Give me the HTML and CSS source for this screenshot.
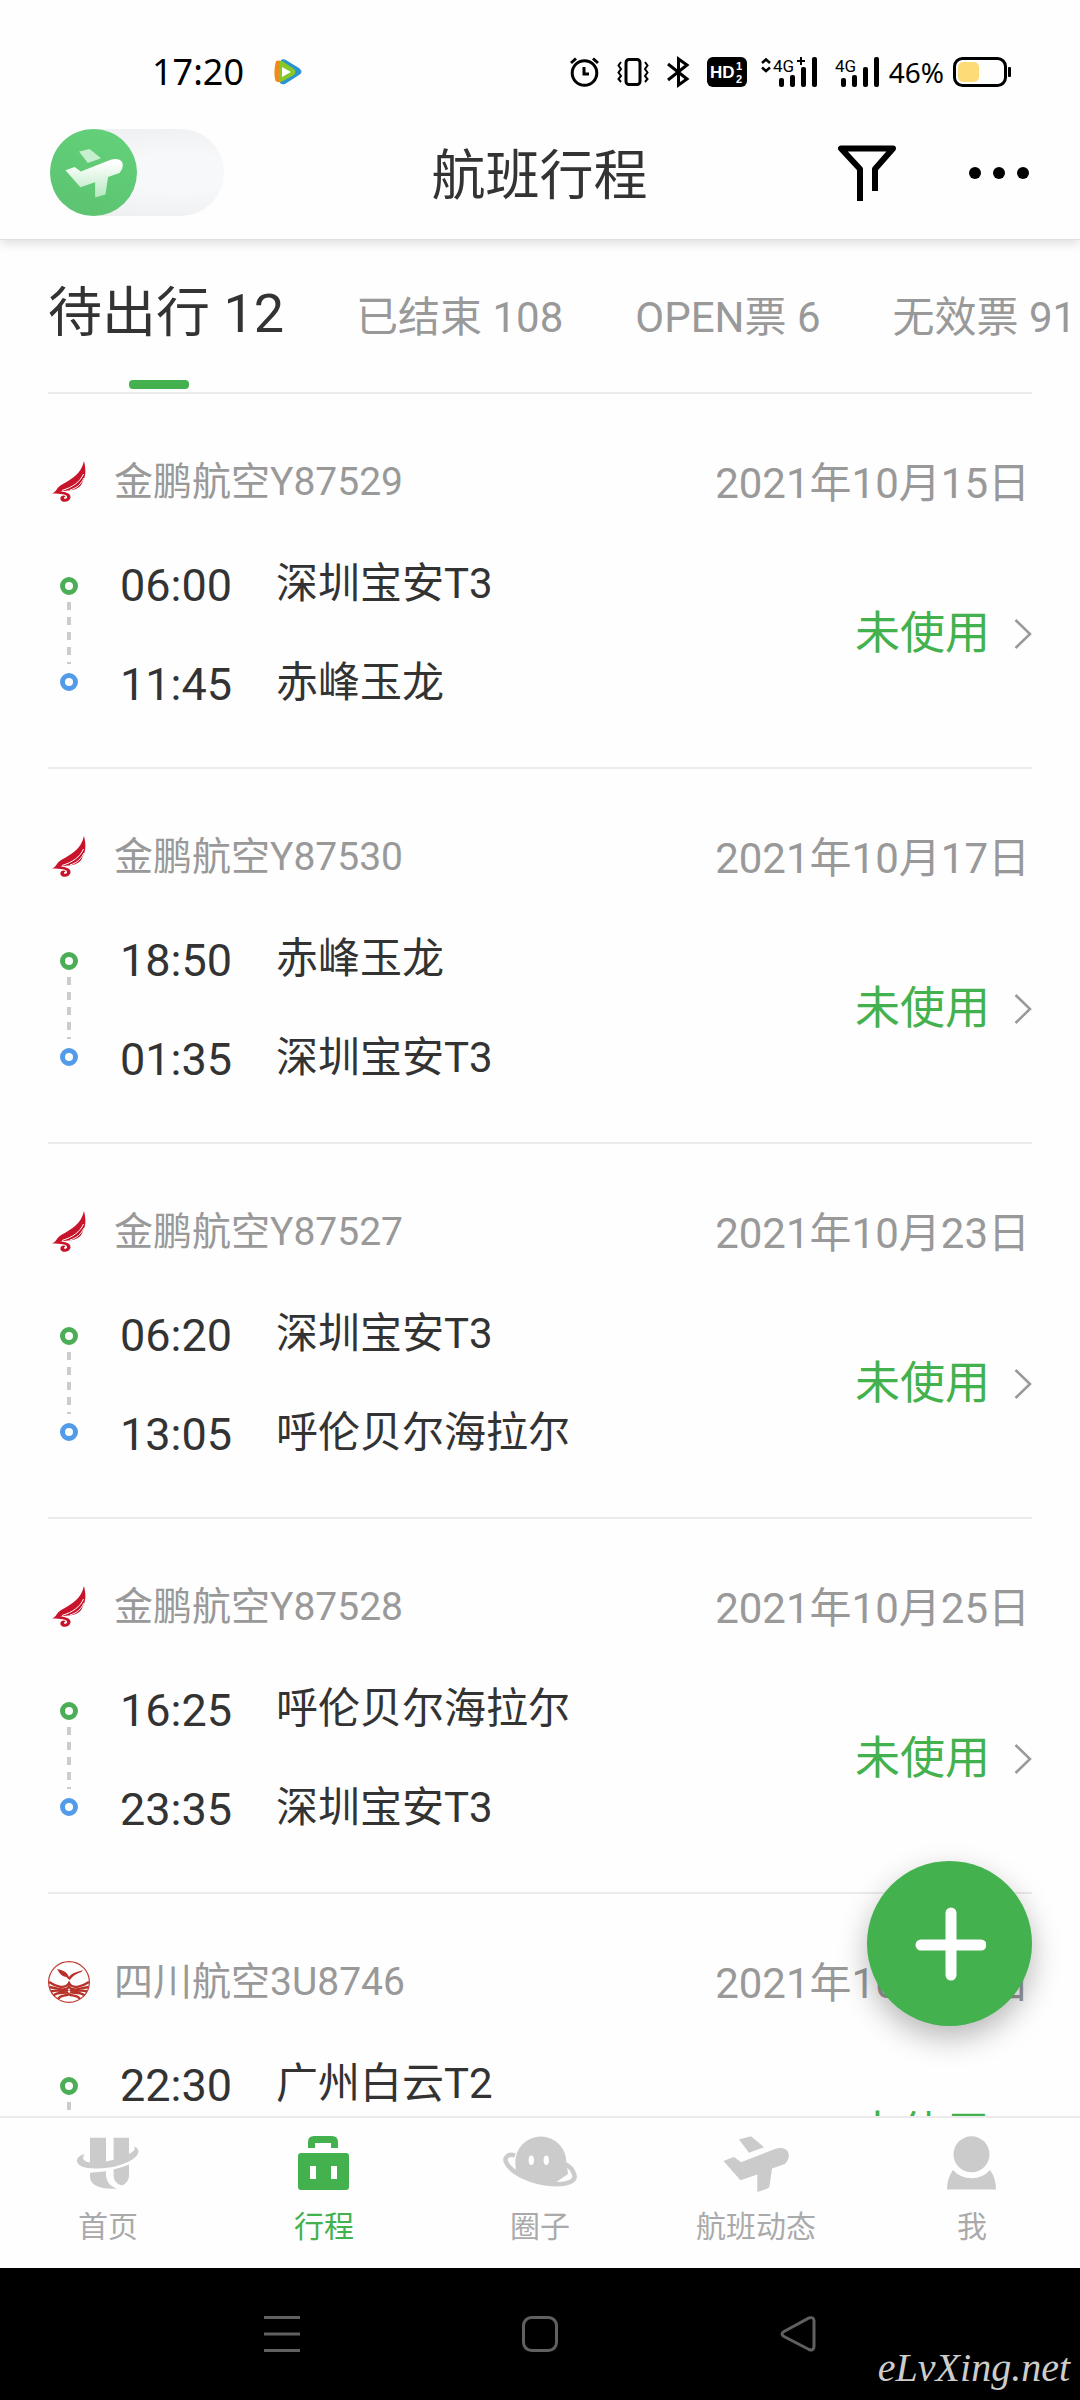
FILE: index.html
```html
<!DOCTYPE html>
<html lang="zh-CN">
<head>
    <meta charset="UTF-8">
    <meta name="viewport" content="width=device-width, initial-scale=1.0">
    <title>航班行程</title>
    <link rel="stylesheet" href="styles.css">
</head>
<body>
    <!-- 图标 -->
    <svg class="sprite" aria-hidden="true">
        <symbol id="icon-plane" viewBox="0 0 66 56">
            <path d="M16 3.5 27 .6Q28.500 .2 29.500 1.500L41 11.300 26 16.700Z"/>
            <path d="M.5 25 10 21.300Q11.500 21 12.500 22L18 26.300 52 13Q61 10 65 15.500Q67.500 22 62 28L49 32.500 46.500 50Q46.200 52 44 52.800L34.300 56V38.500L17.500 44.300Z"/>
        </symbol>
        <symbol id="logo-jinpeng" viewBox="0 0 42 42">
            <path fill="#c8142b" d="M36 0C38 8 38 15 35 20C33 26 29 29 20 29.500C17 30 15 30 12 30.500C17 31 23 32 22.500 36.500C22 41 14 42.500 12.500 38.500C11.500 35 16 33.500 17.500 35.500C14 37 17 39 18.800 37C20.500 33.500 14 32.500 4 32.500C9 30.500 8 27 14 23.500C24 18 33 13 36 0Z"/>
            <path fill="none" stroke="#fff" stroke-width="1" d="M35.500 13C32 21 25 26 14 29.500M36 17C33 23 29 27 22 29"/>
        </symbol>
        <symbol id="logo-sichuan" viewBox="0 0 42 42">
            <circle cx="21" cy="21" r="20.400" fill="#fff" stroke="#c0392f" stroke-width="1.200"/>
            <path fill="#b8322a" d="M9 8C15 9 19 11 21 16C25 11 30 11 35 9C33 13 27 11 22 19C19 18 20 16 16 15.500C12 14 11 11 9 8Z"/>
            <g fill="none" stroke="#b8322a" stroke-width="2.400">
                <path d="M1 21C7 25 17 29 21 22C25 29 35 25 41 21"/>
                <path d="M1.500 26C9 27 18 31 21 25.500C24 31 33 27 40.500 26"/>
                <path d="M3 30.500C10 28 17 32 20 28.500M22 28.500C25 32 32 28 39 30.500"/>
                <path d="M5.500 34.500C11 30 16 33 20 31M22 31C26 33 31 30 36.500 34.500"/>
                <path d="M10 38C13 33 17 36 20.500 33C25 36 29 33 32 38"/>
            </g>
        </symbol>
        <symbol id="icon-arrow" viewBox="0 0 18 30">
            <path d="M1.500 1 16 15 1.500 29" fill="none" stroke="#999" stroke-width="2.500"/>
        </symbol>
    </svg>

    <div class="app">
        <div class="status-bar">
            <div class="status-left">
                <span class="clock">17:20</span>
                <svg width="28" height="26" viewBox="0 0 28 26">
                    <path d="M7 1Q8 0 11 .5L25 9Q30 13 25 16L11 25Q8 26 6 24Z" fill="#2b93d1"/>
                    <path d="M2 2Q5 1 7 2V23Q4 24 1.500 22Q-1 12 2 2Z" fill="#f08a1d"/>
                    <path d="M6 3Q6 1 9 2.500L20 10Q23 13 20 16L9 22Q6 24 5 21Z" fill="#86c827"/>
                    <path d="M8 8 17 13 8 18Z" fill="#fff"/>
                </svg>
            </div>
            <div class="status-right">
                <svg class="st-alarm" width="29" height="30" viewBox="0 0 29 30" fill="none" stroke="#000" stroke-width="3">
                    <circle cx="14.500" cy="16" r="12.300"/>
                    <path d="M1 6 6 1.500M28 6 23 1.500M14 10V17H19"/>
                </svg>
                <svg class="st-vibrate" width="32" height="30" viewBox="0 0 32 30" fill="none" stroke="#000">
                    <rect x="9" y="2.500" width="14" height="25" rx="3" stroke-width="3"/>
                    <path d="M4 5 1.500 8.500 4 12 1.500 15.500 4 19 1.500 22 4 25M28 5 30.500 8.500 28 12 30.500 15.500 28 19 30.500 22 28 25" stroke-width="2"/>
                </svg>
                <svg class="st-bt" width="22" height="30" viewBox="0 0 22 30" fill="none" stroke="#000" stroke-width="3">
                    <path d="M1 7 20 22 11.500 28V2L20 8 1 23"/>
                </svg>
                <svg class="st-hd" width="40" height="30" viewBox="0 0 40 30">
                    <rect width="40" height="30" rx="6"/>
                    <text x="3" y="21" class="hd-text">HD</text>
                    <text x="29" y="13" class="hd-num">1</text>
                    <text x="29" y="26" class="hd-num">2</text>
                </svg>
                <svg class="st-signal" width="58" height="30" viewBox="0 0 58 30">
                    <path d="M1 6 5 2.500 9 6M1 10.500 5 14 9 10.500" fill="none" stroke="#000" stroke-width="2.500"/>
                    <text x="12" y="15" class="net-text">4G</text>
                    <path d="M36 4H44M40 0V8" stroke="#000" stroke-width="2"/>
                    <rect x="18" y="21" width="5" height="9" rx="2"/>
                    <rect x="29" y="18" width="5" height="12" rx="2"/>
                    <rect x="40" y="10" width="5" height="20" rx="2"/>
                    <rect x="51" y="0" width="5" height="30" rx="2"/>
                </svg>
                <svg class="st-signal2" width="45" height="30" viewBox="0 0 45 30">
                    <text x="0" y="15" class="net-text">4G</text>
                    <rect x="6" y="21" width="5" height="9" rx="2"/>
                    <rect x="17" y="18" width="5" height="12" rx="2"/>
                    <rect x="28" y="10" width="5" height="20" rx="2"/>
                    <rect x="39" y="0" width="5" height="30" rx="2"/>
                </svg>
                <span class="battery-text">46%</span>
                <svg width="58" height="30" viewBox="0 0 58 30">
                    <rect x="1.500" y="1.500" width="51" height="27" rx="8" fill="none" stroke="#000" stroke-width="3"/>
                    <rect x="5" y="5" width="21" height="20" rx="5" fill="#fddc78"/>
                    <rect x="55" y="10" width="3" height="10" rx="1"/>
                </svg>
            </div>
        </div>

        <header class="header">
            <label class="toggle">
                <input type="checkbox" aria-label="切换">
                <span class="knob">
                    <svg width="58" height="50" viewBox="0 0 66 56">
                        <defs>
                            <linearGradient id="plane-fill" x1="0" y1="0" x2="0" y2="1">
                                <stop offset="0.100" stop-color="#fff"/>
                                <stop offset="1" stop-color="#b4e8bf"/>
                            </linearGradient>
                        </defs>
                        <path fill="#c5efcd" d="M16 3.500 28 .6 41 11.300 26 16.700Z"/>
                        <path fill="url(#plane-fill)" d="M.5 25 11 21.300 18 26.300 52 13Q61 10 65 15.500Q67.500 22 62 28L49 32.500 46 52.500 34.300 56V38.500L17.500 44.300Z"/>
                    </svg>
                </span>
            </label>
            <h1>航班行程</h1>
            <div class="header-actions">
                <button type="button" aria-label="筛选">
                    <svg width="58" height="56" viewBox="0 0 58 56" fill="none" stroke="#000" stroke-width="6" stroke-linejoin="round">
                        <path d="M22 56V24L3 3.500H55L37 24V46"/>
                    </svg>
                </button>
                <button type="button" aria-label="更多">
                    <svg width="60" height="12" viewBox="0 0 60 12">
                        <circle cx="6" cy="6" r="6"/>
                        <circle cx="30" cy="6" r="6"/>
                        <circle cx="54" cy="6" r="6"/>
                    </svg>
                </button>
            </div>
        </header>

        <nav class="tabs">
            <button type="button" class="tab active">待出行 12</button>
            <button type="button" class="tab">已结束 108</button>
            <button type="button" class="tab">OPEN票 6</button>
            <button type="button" class="tab">无效票 91</button>
        </nav>

        <main class="content">
            <div class="flight-list">
                <article class="flight">
                    <div class="flight-head">
                        <svg class="logo"><use href="#logo-jinpeng"/></svg>
                        <span class="flight-no">金鹏航空Y87529</span>
                        <span class="date">2021年10月15日</span>
                    </div>
                    <div class="flight-body">
                        <div class="track"><i class="dot"></i><i class="dash"></i><i class="dot arrive"></i></div>
                        <div class="route">
                            <div class="stop"><span class="time">06:00</span><span class="city">深圳宝安T3</span></div>
                            <div class="stop"><span class="time">11:45</span><span class="city">赤峰玉龙</span></div>
                        </div>
                        <a href="#" class="state">未使用<svg><use href="#icon-arrow"/></svg></a>
                    </div>
                </article>

                <article class="flight">
                    <div class="flight-head">
                        <svg class="logo"><use href="#logo-jinpeng"/></svg>
                        <span class="flight-no">金鹏航空Y87530</span>
                        <span class="date">2021年10月17日</span>
                    </div>
                    <div class="flight-body">
                        <div class="track"><i class="dot"></i><i class="dash"></i><i class="dot arrive"></i></div>
                        <div class="route">
                            <div class="stop"><span class="time">18:50</span><span class="city">赤峰玉龙</span></div>
                            <div class="stop"><span class="time">01:35</span><span class="city">深圳宝安T3</span></div>
                        </div>
                        <a href="#" class="state">未使用<svg><use href="#icon-arrow"/></svg></a>
                    </div>
                </article>

                <article class="flight">
                    <div class="flight-head">
                        <svg class="logo"><use href="#logo-jinpeng"/></svg>
                        <span class="flight-no">金鹏航空Y87527</span>
                        <span class="date">2021年10月23日</span>
                    </div>
                    <div class="flight-body">
                        <div class="track"><i class="dot"></i><i class="dash"></i><i class="dot arrive"></i></div>
                        <div class="route">
                            <div class="stop"><span class="time">06:20</span><span class="city">深圳宝安T3</span></div>
                            <div class="stop"><span class="time">13:05</span><span class="city">呼伦贝尔海拉尔</span></div>
                        </div>
                        <a href="#" class="state">未使用<svg><use href="#icon-arrow"/></svg></a>
                    </div>
                </article>

                <article class="flight">
                    <div class="flight-head">
                        <svg class="logo"><use href="#logo-jinpeng"/></svg>
                        <span class="flight-no">金鹏航空Y87528</span>
                        <span class="date">2021年10月25日</span>
                    </div>
                    <div class="flight-body">
                        <div class="track"><i class="dot"></i><i class="dash"></i><i class="dot arrive"></i></div>
                        <div class="route">
                            <div class="stop"><span class="time">16:25</span><span class="city">呼伦贝尔海拉尔</span></div>
                            <div class="stop"><span class="time">23:35</span><span class="city">深圳宝安T3</span></div>
                        </div>
                        <a href="#" class="state">未使用<svg><use href="#icon-arrow"/></svg></a>
                    </div>
                </article>

                <article class="flight">
                    <div class="flight-head">
                        <svg class="logo"><use href="#logo-sichuan"/></svg>
                        <span class="flight-no">四川航空3U8746</span>
                        <span class="date">2021年10月28日</span>
                    </div>
                    <div class="flight-body">
                        <div class="track"><i class="dot"></i><i class="dash"></i><i class="dot arrive"></i></div>
                        <div class="route">
                            <div class="stop"><span class="time">22:30</span><span class="city">广州白云T2</span></div>
                        </div>
                        <a href="#" class="state">未使用<svg><use href="#icon-arrow"/></svg></a>
                    </div>
                </article>
            </div>

            <button type="button" class="fab" aria-label="添加行程">
                <svg width="72" height="74" viewBox="0 0 72 74" stroke="#fff" stroke-width="11" stroke-linecap="round">
                    <path d="M37 6V68M7 38H67"/>
                </svg>
            </button>
        </main>

        <nav class="bottom-nav">
            <a href="#">
                <svg width="66" height="56" viewBox="0 0 66 56">
                    <path d="M15 1.700H31V25.500L38.600 23.800V1.700H54V18Q58 16 59.500 14Q60 12 59 10.500Q63.500 12 63.500 15.500C63 24 42 32.300 24 32.500C8 33 2 29 2 25C2 21 6 19 9.500 18Q7 22 9 24Q11 26 15 26.500Z"/>
                    <path d="M15 36.700 31 35.300C30.500 45 34 50 42 52.500C28 54 15 50 15 41Z"/>
                    <path d="M38.600 33.500Q47 31.500 54 28.500V40.500Q53 47 47 49.500C41 48 38.600 44 38.600 38Z"/>
                </svg>
                <span>首页</span>
            </a>
            <a href="#" class="active">
                <svg width="52" height="56" viewBox="0 0 52 56">
                    <path d="M10 12V6Q10 0 16 0H34Q40 0 40 6V12H33V7H17V12Z"/>
                    <path fill-rule="evenodd" d="M3 17H48Q51 17 51 20V51Q51 54 48 54H3Q0 54 0 51V20Q0 17 3 17ZM12 30V43H18V30ZM33 30V43H39V30Z"/>
                </svg>
                <span>行程</span>
            </a>
            <a href="#">
                <svg width="76" height="56" viewBox="0 0 76 56">
                    <path d="M13.300 26A25.500 25.500 0 0 1 64.300 26L66 38 50 49C35 50 20 42 14 35Z"/>
                    <path d="M13 19.500C6 17 2 22 4 26C9 37 30 47 50 48C66 49 75 45 72 38C71 34 67 30 63 28" fill="none" stroke="#cbcbcb" stroke-width="4.500"/>
                    <ellipse cx="29.300" cy="24.300" rx="2.700" ry="4.700" fill="#fff"/>
                    <ellipse cx="44.300" cy="24.300" rx="2.700" ry="4.700" fill="#fff"/>
                </svg>
                <span>圈子</span>
            </a>
            <a href="#">
                <svg width="66" height="56"><use href="#icon-plane"/></svg>
                <span>航班动态</span>
            </a>
            <a href="#">
                <svg width="50" height="56" viewBox="0 0 50 56">
                    <circle cx="24.500" cy="18.300" r="18"/>
                    <path d="M6 34Q13 42 24.500 42.300Q36 42 43 34Q49 42 49 53.500H0Q0 42 6 34Z"/>
                </svg>
                <span>我</span>
            </a>
        </nav>

        <div class="system-nav">
            <button type="button" aria-label="最近任务">
                <svg width="36" height="36" viewBox="0 0 36 36" stroke="#606060" stroke-width="3"><path d="M0 1.500H36M0 18H36M0 34.500H36"/></svg>
            </button>
            <button type="button" aria-label="主屏幕">
                <svg width="36" height="36" viewBox="0 0 36 36" fill="none" stroke="#606060" stroke-width="3"><rect x="1.500" y="1.500" width="33" height="33" rx="8"/></svg>
            </button>
            <button type="button" aria-label="返回">
                <svg width="36" height="36" viewBox="0 0 36 36" fill="none" stroke="#606060" stroke-width="3"><path d="M4 15.500 29 2Q34 .5 34 5V30Q34 35.500 29 33.500L4 20.500Q0 18 4 15.500Z"/></svg>
            </button>
            <span class="watermark">eLvXing.net</span>
        </div>
    </div>
</body>
</html>
```
FILE: styles.css
```css
* {
    box-sizing: border-box;
}

body {
    margin: 0;
    background: #fefefe;
    color: #333;
    font-family: Roboto, "Noto Sans CJK SC", sans-serif;
}

button {
    padding: 0;
    border: none;
    background: none;
    font-family: inherit;
    cursor: pointer;
}

a {
    color: inherit;
    text-decoration: none;
}

svg {
    display: block;
    flex-shrink: 0;
}

.sprite {
    position: absolute;
    width: 0;
    height: 0;
}

.app {
    display: flex;
    flex-direction: column;
    height: 100vh;
    overflow: hidden;
}

/* 状态栏 */
.status-bar {
    display: flex;
    justify-content: space-between;
    align-items: center;
    padding: 45px 69px 0 152px;
    line-height: 54px;
    color: #000;
    font-family: "Noto Sans", sans-serif;
}

.status-left {
    display: flex;
    align-items: center;
    gap: 30px;
}

.status-right {
    display: flex;
    align-items: center;
}

.status-right svg {
    overflow: visible;
}

.clock {
    font-size: 36px;
}

.battery-text {
    margin-right: 9px;
    font-size: 28px;
}

.st-alarm,
.st-vibrate,
.st-bt {
    margin-right: 18px;
}

.st-hd {
    margin-right: 14px;
}

.st-signal {
    margin-right: 16px;
}

.st-signal2 {
    margin-right: 9px;
}

.hd-text {
    fill: #fff;
    font: bold 17px "Liberation Sans", sans-serif;
}

.hd-num {
    fill: #fff;
    font: bold 11px "Liberation Sans", sans-serif;
}

.net-text {
    font: 17px Roboto, sans-serif;
}

/* 顶部标题 */
.header {
    display: grid;
    grid-template-columns: 1fr auto 1fr;
    align-items: center;
    padding: 30px 51px 23px 50px;
    border-bottom: 1px solid #e0e0e0;
    box-shadow: 0 4px 10px rgba(0, 0, 0, 0.12);
    clip-path: inset(0 0 -20px);
}

.header h1 {
    margin: 0;
    padding-top: 8px;
    font-size: 54px;
    font-weight: 400;
    line-height: 72px;
}

.toggle {
    position: relative;
    width: 174px;
    height: 87px;
}

.toggle input {
    appearance: none;
    width: 100%;
    height: 100%;
    margin: 0;
    border-radius: 44px;
    background: radial-gradient(ellipse at 75% 50%, #f7f8fa 30%, #ebecee 100%);
}

.knob {
    position: absolute;
    top: 0;
    left: 0;
    display: flex;
    align-items: center;
    justify-content: center;
    width: 87px;
    height: 87px;
    border-radius: 50%;
    background: linear-gradient(20deg, #5cc271, #63d27a);
}

.header-actions {
    display: flex;
    justify-content: flex-end;
    align-items: center;
    gap: 73px;
}

/* 分类标签 */
.tabs {
    position: relative;
    display: flex;
    align-items: baseline;
    gap: 72px;
    margin-left: 48px;
    margin-right: 48px;
    padding: 38px 0;
    border-bottom: 2px solid #ebebeb;
    white-space: nowrap;
}

.tab {
    color: #999;
    font-size: 42px;
    line-height: 72px;
}

.tab.active {
    color: #333;
    font-size: 54px;
}

.tab.active::after {
    content: "";
    position: absolute;
    left: 81px;
    bottom: 3px;
    width: 60px;
    height: 9px;
    border-radius: 4px;
    background: #43b14d;
}

/* 航班列表 */
.content {
    position: relative;
    flex: 1;
    min-height: 0;
}

.flight-list {
    height: 100%;
    padding: 0 48px;
    overflow-y: auto;
    scrollbar-width: none;
}

.flight {
    padding: 58px 0 52px;
    border-bottom: 2px solid #ebebeb;
}

.flight-head {
    display: flex;
    align-items: flex-start;
    height: 60px;
    color: #999;
}

.logo {
    width: 42px;
    height: 42px;
    margin: 9px 24px 0 0;
}

.flight-no {
    font-size: 39px;
    line-height: 60px;
}

.date {
    margin-left: auto;
    padding-right: 2px;
    font-size: 42px;
    line-height: 64px;
}

.flight-body {
    display: flex;
    align-items: flex-start;
    margin-top: 44px;
}

.track {
    display: flex;
    flex-direction: column;
    align-items: center;
    width: 42px;
    margin-right: 30px;
    padding-top: 21px;
}

.dot {
    width: 18px;
    height: 18px;
    border: 5px solid #4bad55;
    border-radius: 50%;
}

.dot.arrive {
    border-color: #529be8;
}

.dash {
    width: 4px;
    height: 62px;
    margin: 7px 0 9px;
    background: repeating-linear-gradient(#ccc 0 8px, transparent 8px 15px);
}

.route {
    display: grid;
    gap: 39px;
}

.stop {
    display: grid;
    grid-template-columns: 156px auto;
    height: 60px;
}

.time {
    font-size: 45px;
    line-height: 60px;
}

.city {
    font-size: 42px;
    line-height: 56px;
}

.state {
    display: flex;
    align-items: center;
    gap: 24px;
    margin: 46px 0 0 auto;
    color: #43b14d;
    font-size: 45px;
    line-height: 64px;
}

.state svg {
    width: 18px;
    height: 30px;
}

.fab {
    position: absolute;
    right: 48px;
    bottom: 90px;
    display: flex;
    align-items: center;
    justify-content: center;
    width: 165px;
    height: 165px;
    border-radius: 50%;
    background: #43b14d;
    box-shadow: 0 12px 30px rgba(0, 0, 0, 0.28);
}

/* 底部导航 */
.bottom-nav {
    display: grid;
    grid-template-columns: repeat(5, 1fr);
    padding: 18px 0 23px;
    border-top: 2px solid #ebebeb;
}

.bottom-nav a {
    display: flex;
    flex-direction: column;
    align-items: center;
    gap: 17px;
    color: #aaa;
    font-size: 30px;
    line-height: 36px;
}

.bottom-nav svg {
    fill: #cbcbcb;
}

.bottom-nav .active {
    color: #43b14d;
}

.bottom-nav .active svg {
    fill: #43b14d;
}

.system-nav {
    position: relative;
    display: flex;
    justify-content: center;
    align-items: center;
    gap: 222px;
    height: 132px;
    background: #000;
}

.watermark {
    position: absolute;
    right: 10px;
    bottom: 8px;
    color: #ccc;
    font-family: "Brush Script MT", "Liberation Serif", cursive;
    font-size: 40px;
    font-style: italic;
    line-height: 48px;
}
```
